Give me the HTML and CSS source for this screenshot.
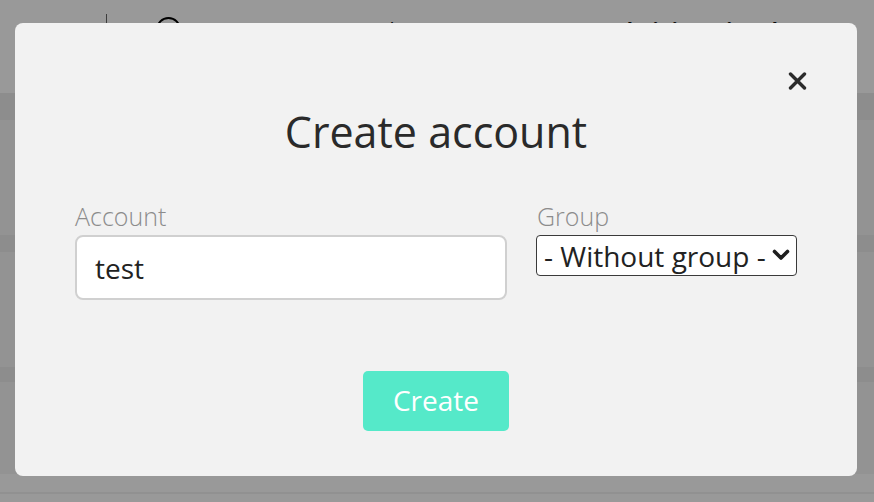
FILE: index.html
```html
<!DOCTYPE html>
<html lang="en">
<head>
<meta charset="utf-8">
<title>Create account</title>
<link rel="stylesheet" href="styles.css">
</head>
<body>
<div class="page">
  <header class="topbar">
    <span class="divider"></span>
    <span class="circle-icon"></span>
    <span class="top-text">Accounts overview list</span>
    <span class="top-text bold">Administration tk</span>
  </header>
  <div class="band"></div>
  <div class="row"></div>
  <div class="band short"></div>
  <div class="row"></div>
  <div class="band thin"></div>
  <div class="row last"></div>
  <div class="footer-line"></div>
</div>

<div class="overlay">
  <div class="modal">
    <div class="close-row">
      <button class="close" aria-label="Close">
        <svg width="19" height="18" viewBox="0 0 19 18"><path d="M2.5 2 L16.5 16 M16.5 2 L2.5 16" stroke="#2b2b2b" stroke-width="3.4" stroke-linecap="round"/></svg>
      </button>
    </div>
    <h1 class="title">Create account</h1>
    <div class="form-row">
      <div class="field account">
        <label class="label">Account</label>
        <input class="text-input" type="text" value="test">
      </div>
      <div class="field group">
        <label class="label">Group</label>
        <div class="select-wrap">
          <select class="select">
            <option>- Without group -</option>
          </select>
          <svg class="chevron" width="18" height="12" viewBox="0 0 18 12"><path d="M2.5 2.5 L9 9 L15.5 2.5" fill="none" stroke="#1e1e1e" stroke-width="3.6" stroke-linecap="round" stroke-linejoin="round"/></svg>
        </div>
      </div>
    </div>
    <div class="actions">
      <button class="create">Create</button>
    </div>
  </div>
</div>
</body>
</html>
```
FILE: styles.css
```css
* { box-sizing: border-box; }
html, body { margin: 0; padding: 0; }
body {
  font-family: "Open Sans", "Noto Sans", sans-serif;
  background: #ffffff;
  width: 874px;
  height: 502px;
  overflow: hidden;
}

/* background page */
.page { display: flex; flex-direction: column; }
.topbar {
  height: 93px;
  background: #ffffff;
  display: flex;
  align-items: flex-start;
  padding-top: 14px;
  padding-left: 106px;
}
.divider { width: 1px; height: 22px; background: #666; }
.circle-icon {
  width: 25px; height: 25px;
  border: 2px solid #000;
  border-radius: 50%;
  margin-left: 49px;
  margin-top: 3px;
}
.top-text {
  font-size: 20px;
  color: #111;
  margin-top: 2px;
  margin-left: 30px;
}
.top-text.bold { font-weight: 700; margin-left: 190px; }
.band { height: 27px; background: #ececec; }
.band.short { height: 17px; }
.band.thin { height: 15px; }
.row { height: 115px; background: #f6f6f6; }
.row.last { height: 92px; }
.footer-line { height: 20px; border-bottom: 2px solid #f2f2f2; }

/* overlay + modal */
.overlay {
  position: fixed;
  inset: 0;
  background: rgba(0, 0, 0, 0.4);
  padding: 23px 17px 0 15px;
}
.modal {
  background: #f2f2f2;
  border-radius: 8px;
  height: 453px;
  padding: 0 60px 45px 60px;
  display: flex;
  flex-direction: column;
}
.close-row {
  display: flex;
  justify-content: flex-end;
  padding-top: 49px;
  margin-right: -10px;
}
.close {
  border: 0;
  background: none;
  padding: 0;
  width: 19px;
  height: 18px;
  display: block;
  cursor: pointer;
}
.close svg { display: block; }
.title {
  margin: 12px 0 0 0;
  font-size: 43px;
  line-height: 60px;
  font-weight: 400;
  color: #2a2a2a;
  text-align: center;
}
.form-row {
  display: flex;
  gap: 29px;
  margin-top: 37px;
}
.field { display: flex; flex-direction: column; }
.account { width: 432px; }
.group { width: 261px; }
.label {
  font-size: 25px;
  line-height: 35px;
  color: #8c8c8c;
  font-weight: 300;
  margin-bottom: 1px;
}
.group .label { padding-left: 1px; }
.text-input {
  height: 65px;
  width: 100%;
  border: 2px solid #d0d0d0;
  border-radius: 8px;
  background: #ffffff;
  font-family: inherit;
  font-size: 28px;
  color: #222;
  padding: 0 0 0 18px;
  outline: none;
}
.select-wrap { position: relative; width: 261px; }
.select {
  appearance: none;
  -webkit-appearance: none;
  width: 261px;
  height: 41px;
  border: 1.5px solid #3a3a3a;
  border-radius: 4px;
  background: #ffffff;
  font-family: inherit;
  font-size: 28px;
  color: #222;
  padding: 0 0 0 7px;
  line-height: 38px;
}
.chevron {
  position: absolute;
  right: 7px;
  top: 14px;
  pointer-events: none;
}
.actions {
  display: flex;
  justify-content: center;
  margin-top: 71px;
}
.create {
  width: 146px;
  height: 60px;
  border: 0;
  border-radius: 5px;
  background: #55e9c9;
  color: #ffffff;
  font-family: inherit;
  font-size: 28px;
  padding: 0 0 2px 0;
}
```
